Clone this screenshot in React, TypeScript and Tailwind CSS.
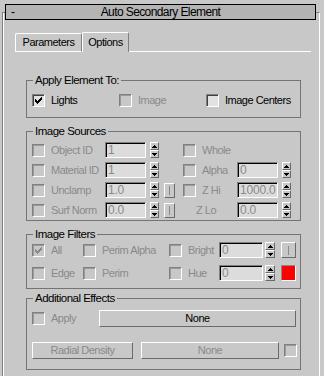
import React from "react";

const DIS = "text-[#8a8a8a]";

function CheckMark({ color }: { color: string }) {
  return (
    <svg width="7" height="7" viewBox="0 0 7 7" shapeRendering="crispEdges" fill={color}>
      <path d="M0 2h1v3H0zM1 3h1v3H1zM2 4h1v3H2zM3 3h1v3H3zM4 2h1v3H4zM5 1h1v3H5zM6 0h1v3H6z" />
    </svg>
  );
}

function Checkbox({ checked = false, disabled = false }: { checked?: boolean; disabled?: boolean }) {
  return (
    <div
      className={
        "w-[13px] h-[13px] shrink-0 flex items-center justify-center border border-t-[#808080] border-l-[#808080] border-b-white border-r-white " +
        (disabled
          ? "bg-[#c8c8c8] shadow-[inset_1px_1px_0_#9a9a9a]"
          : "bg-[#e2e2e2] shadow-[inset_1px_1px_0_#404040]")
      }
    >
      {checked ? <CheckMark color={disabled ? "#8a8a8a" : "#000"} /> : null}
    </div>
  );
}

function CheckLabel({
  label,
  checked,
  disabled,
  width,
}: {
  label: string;
  checked?: boolean;
  disabled?: boolean;
  width: string;
}) {
  return (
    <div className={"flex items-center shrink-0 " + width}>
      <Checkbox checked={checked} disabled={disabled} />
      <span className={"ml-[6px] leading-[13px] whitespace-nowrap " + (disabled ? DIS : "text-black")}>{label}</span>
    </div>
  );
}

function Edit({ value, width }: { value: string; width: string }) {
  return (
    <div
      className={
        "h-[16px] shrink-0 border border-t-[#808080] border-l-[#808080] border-b-white border-r-white shadow-[inset_1px_1px_0_#000] bg-[#dcdcdc] pl-[2px] pt-[1px] text-[12px] tracking-[-0.2px] leading-[13px] whitespace-nowrap overflow-hidden " +
        DIS +
        " " +
        width
      }
    >
      {value}
    </div>
  );
}

function Tri({ up }: { up: boolean }) {
  return (
    <svg width="5" height="3" viewBox="0 0 5 3" shapeRendering="crispEdges" fill="#000">
      <path d={up ? "M2 0h1v1H2zM1 1h3v1H1zM0 2h5v1H0z" : "M0 0h5v1H0zM1 1h3v1H1zM2 2h1v1H2z"} />
    </svg>
  );
}

function Spinner({ width = "w-[9px]" }: { width?: string }) {
  return (
    <div className={"h-[16px] shrink-0 flex flex-col " + width}>
      <div className="h-[8px] flex items-center justify-center border border-t-white border-l-white border-b-[#6a6a6a] border-r-[#6a6a6a] bg-[#c8c8c8]">
        <Tri up />
      </div>
      <div className="h-[8px] flex items-center justify-center border border-t-white border-l-white border-b-[#6a6a6a] border-r-[#6a6a6a] bg-[#c8c8c8]">
        <Tri up={false} />
      </div>
    </div>
  );
}

function BarButton({ width, height }: { width: string; height: string }) {
  return (
    <div
      className={
        "shrink-0 flex items-center justify-center border border-t-white border-l-white border-b-[#6a6a6a] border-r-[#6a6a6a] " +
        width +
        " " +
        height
      }
    >
      <div className="w-[1px] h-[9px] bg-[#8a8a8a]" />
    </div>
  );
}

function PushButton({ label, width, disabled }: { label: string; width: string; disabled?: boolean }) {
  return (
    <div
      className={
        "h-[17px] shrink-0 flex items-center justify-center border border-t-white border-l-white border-b-[#6a6a6a] border-r-[#6a6a6a] leading-[13px] whitespace-nowrap " +
        (disabled ? DIS : "text-black") +
        " " +
        width
      }
    >
      {label}
    </div>
  );
}

function Group({ label, className, children }: { label: string; className: string; children: React.ReactNode }) {
  return (
    <div className={"ml-[23px] w-[275px] border border-[#747474] " + className}>
      <div className="-mt-[8px] ml-[6px] w-fit px-[2px] bg-[#c8c8c8] h-[14px] leading-[14px] text-[11.5px] text-black whitespace-nowrap">
        {label}
      </div>
      {children}
    </div>
  );
}

export default function App() {
  return (
    <div className="w-[324px] h-[376px] bg-[#c8c8c8] overflow-hidden font-['Liberation_Sans',Arial,sans-serif] text-[11px] tracking-[-0.5px] text-black pt-[12px] pl-[2px]">
      <div className="w-[318px] h-[364px] border-l border-t border-r border-l-[#808080] border-t-[#808080] border-r-white shadow-[inset_1px_0_0_#ffffff] flex flex-col">
        {/* Title bar */}
        <div className="-mt-[9px] ml-[2px] w-[311px] h-[16px] shrink-0 border border-black bg-[#b4b4b4] grid grid-cols-1 items-center">
          <span className="col-start-1 row-start-1 justify-self-start pl-[5px] text-[12px] leading-[14px]">-</span>
          <span className="col-start-1 row-start-1 justify-self-center text-[12px] tracking-[-0.6px] leading-[14px] whitespace-nowrap">
            Auto Secondary Element
          </span>
        </div>

        {/* Tabs */}
        <div className="mt-[12px] ml-[12px] w-[296px] h-[20px] shrink-0 flex items-end">
          <div className="w-[67px] h-[19px] border border-t-white border-l-white border-r-[#808080] border-b-white flex items-center justify-center leading-[13px] whitespace-nowrap rounded-t-[2px]">
            Parameters
          </div>
          <div className="w-[47px] h-[20px] border-t border-l border-r border-t-white border-l-white border-r-[#808080] flex items-center justify-center pb-[1px] leading-[13px] whitespace-nowrap rounded-t-[2px]">
            Options
          </div>
          <div className="flex-1 h-[1px] bg-white" />
        </div>

        {/* Apply Element To */}
        <Group label="Apply Element To:" className="mt-[28px] pb-[10px] shrink-0">
          <div className="mt-[7px] h-[13px] pl-[5px] grid grid-cols-[87px_87px_1fr]">
            <CheckLabel label="Lights" checked width="w-[87px]" />
            <CheckLabel label="Image" disabled width="w-[87px]" />
            <CheckLabel label="Image Centers" width="w-[80px]" />
          </div>
        </Group>

        {/* Image Sources */}
        <Group label="Image Sources" className="mt-[13px] pb-[2px] shrink-0">
          <div className="mt-[4px] pl-[5px] flex flex-col gap-[4px]">
            <div className="h-[16px] flex items-center">
              <CheckLabel label="Object ID" disabled width="w-[73px]" />
              <Edit value="1" width="w-[41px]" />
              <div className="w-[4px]" />
              <Spinner />
              <div className="w-[24px]" />
              <CheckLabel label="Whole" disabled width="w-[54px]" />
            </div>
            <div className="h-[16px] flex items-center">
              <CheckLabel label="Material ID" disabled width="w-[73px]" />
              <Edit value="1" width="w-[41px]" />
              <div className="w-[4px]" />
              <Spinner />
              <div className="w-[24px]" />
              <CheckLabel label="Alpha" disabled width="w-[54px]" />
              <Edit value="0" width="w-[41px]" />
              <div className="w-[4px]" />
              <Spinner />
            </div>
            <div className="h-[16px] flex items-center">
              <CheckLabel label="Unclamp" disabled width="w-[73px]" />
              <Edit value="1.0" width="w-[41px]" />
              <div className="w-[4px]" />
              <Spinner />
              <div className="w-[5px]" />
              <BarButton width="w-[11px]" height="h-[15px]" />
              <div className="w-[8px]" />
              <CheckLabel label="Z Hi" disabled width="w-[54px]" />
              <Edit value="1000.0" width="w-[41px]" />
              <div className="w-[4px]" />
              <Spinner />
            </div>
            <div className="h-[16px] flex items-center">
              <CheckLabel label="Surf Norm" disabled width="w-[73px]" />
              <Edit value="0.0" width="w-[41px]" />
              <div className="w-[4px]" />
              <Spinner />
              <div className="w-[5px]" />
              <BarButton width="w-[11px]" height="h-[15px]" />
              <div className="w-[8px]" />
              <div className={"w-[54px] shrink-0 pl-[13px] leading-[13px] " + DIS}>Z Lo</div>
              <Edit value="0.0" width="w-[41px]" />
              <div className="w-[4px]" />
              <Spinner />
            </div>
          </div>
        </Group>

        {/* Image Filters */}
        <Group label="Image Filters" className="mt-[13px] pb-[7px] shrink-0">
          <div className="mt-[1px] pl-[5px] flex flex-col gap-[7px]">
            <div className="h-[16px] flex items-center">
              <CheckLabel label="All" checked disabled width="w-[51px]" />
              <CheckLabel label="Perim Alpha" disabled width="w-[86px]" />
              <CheckLabel label="Bright" disabled width="w-[50px]" />
              <Edit value="0" width="w-[44px]" />
              <div className="w-[2px]" />
              <Spinner width="w-[10px]" />
              <div className="w-[6px]" />
              <BarButton width="w-[15px]" height="h-[16px]" />
            </div>
            <div className="h-[16px] flex items-center">
              <CheckLabel label="Edge" disabled width="w-[51px]" />
              <CheckLabel label="Perim" disabled width="w-[86px]" />
              <CheckLabel label="Hue" disabled width="w-[50px]" />
              <Edit value="0" width="w-[44px]" />
              <div className="w-[2px]" />
              <Spinner width="w-[10px]" />
              <div className="w-[6px]" />
              <div className="w-[15px] h-[16px] shrink-0 bg-[#ff0000] border border-t-[#8a8a8a] border-l-[#8a8a8a] border-b-white border-r-white" />
            </div>
          </div>
        </Group>

        {/* Additional Effects */}
        <Group label="Additional Effects" className="mt-[9px] pb-[10px] shrink-0">
          <div className="mt-[5px] pl-[5px] flex flex-col gap-[15px]">
            <div className="h-[17px] flex items-center">
              <CheckLabel label="Apply" disabled width="w-[67px]" />
              <PushButton label="None" width="w-[197px]" />
            </div>
            <div className="h-[17px] flex items-center">
              <PushButton label="Radial Density" disabled width="w-[101px]" />
              <div className="w-[8px]" />
              <PushButton label="None" disabled width="w-[138px]" />
              <div className="w-[5px]" />
              <Checkbox disabled />
            </div>
          </div>
        </Group>
      </div>
    </div>
  );
}
